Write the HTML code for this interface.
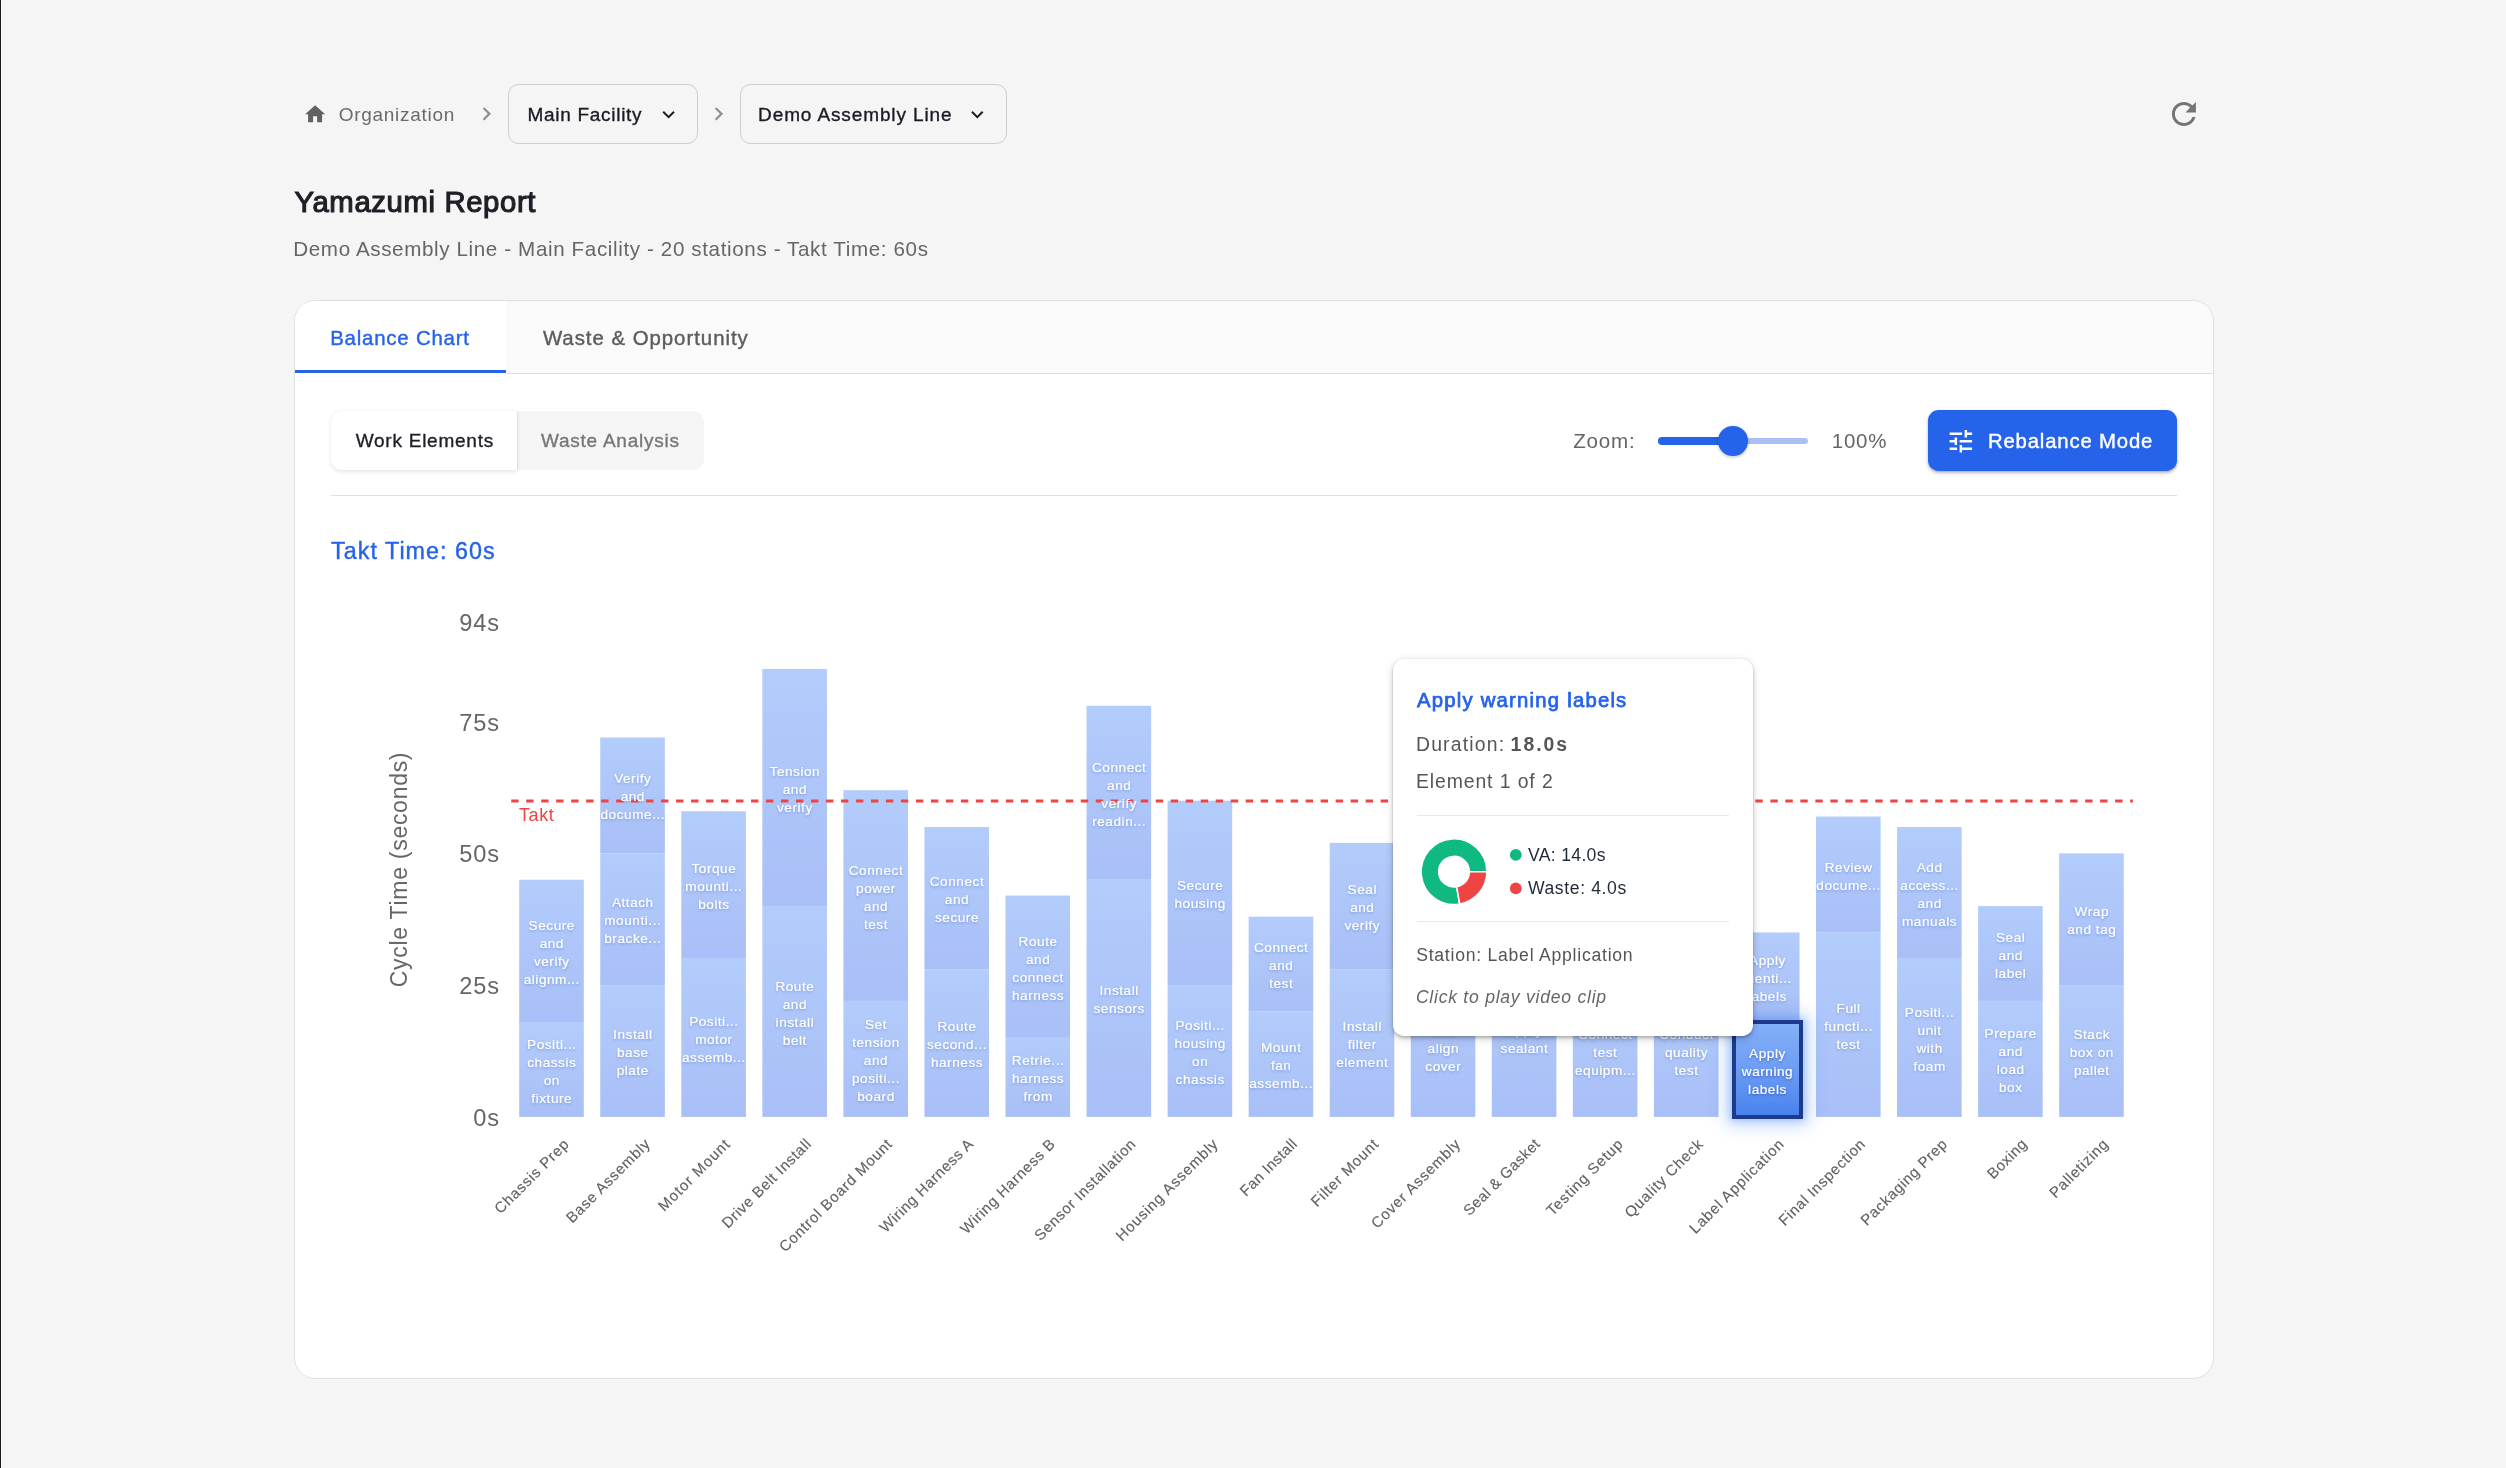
<!DOCTYPE html>
<html><head><meta charset="utf-8"><title>Yamazumi Report</title>
<style>
html,body{margin:0;padding:0}
body{width:2506px;height:1468px;overflow:hidden;background:#f5f5f5;position:relative;font-family:"Liberation Sans", sans-serif}
.a{position:absolute;box-sizing:border-box}
svg.full{position:absolute;left:0;top:0;width:2506px;height:1468px;overflow:visible}
svg text{font-family:"Liberation Sans", sans-serif}
</style></head><body>
<div class="a" style="left:0;top:0;width:1px;height:1468px;background:#18181d"></div>
<div class="a" style="left:1px;top:0;width:1px;height:1468px;background:#fbfbfb"></div>
<!-- breadcrumb selects -->
<div class="a" style="left:508px;top:84px;width:190px;height:59.5px;border:1px solid #cdcdcd;border-radius:10.7px"></div>
<div class="a" style="left:740px;top:84px;width:266.5px;height:59.5px;border:1px solid #cdcdcd;border-radius:10.7px"></div>
<!-- card -->
<div class="a" style="left:294px;top:300px;width:1920px;height:1079px;background:#fff;border:1px solid #e0e0e0;border-radius:21.3px;overflow:hidden">
  <div class="a" style="left:0;top:0;width:1918px;height:73px;background:#fafafa;border-bottom:1px solid #e0e0e0"></div>
  <div class="a" style="left:0;top:0;width:211px;height:73px;background:#fff"></div>
  <div class="a" style="left:0;top:69.3px;width:211px;height:3.2px;background:#2563eb"></div>
</div>
<!-- toggle group -->
<div class="a" style="left:331px;top:411px;width:373px;height:59px;background:#f5f5f5;border-radius:10.7px"></div>
<div class="a" style="left:331px;top:411px;width:186px;height:59px;background:#fff;border-radius:10.7px 0 0 10.7px;box-shadow:0 1.3px 4px rgba(0,0,0,0.10),1px 0 1px rgba(0,0,0,0.05)"></div>
<!-- slider -->
<div class="a" style="left:1657.8px;top:438.3px;width:150px;height:5.4px;border-radius:3px;background:#a9c1f7"></div>
<div class="a" style="left:1657.8px;top:437px;width:78px;height:8px;border-radius:4px;background:#2563eb"></div>
<div class="a" style="left:1718.3px;top:426.2px;width:29.6px;height:29.6px;border-radius:50%;background:#2563eb;box-shadow:0 1.5px 3px rgba(0,0,0,0.16),0 1px 5px rgba(0,0,0,0.08)"></div>
<!-- button -->
<div class="a" style="left:1928px;top:410px;width:249px;height:60.5px;border-radius:10.7px;background:#2563eb;box-shadow:0 1.5px 3px rgba(0,0,0,0.20),0 1px 2px rgba(0,0,0,0.10),0 3px 6px rgba(0,0,0,0.06)"></div>
<!-- divider -->
<div class="a" style="left:331px;top:495px;width:1846px;height:1px;background:#e0e0e0"></div>

<svg class="full" viewBox="0 0 2506 1468" style="opacity:0.9999">
<svg x="303.10" y="102.20" width="24" height="24" viewBox="0 0 24 24"><path d="M10 20v-6h4v6h5v-8h3L12 3 2 12h3v8z" fill="#616161"/></svg>
<svg x="473.20" y="100.50" width="26.67" height="26.67" viewBox="0 0 24 24"><path d="M10 6L8.59 7.41 13.17 12l-4.58 4.59L10 18l6-6z" fill="#8f8f8f"/></svg>
<svg x="705.30" y="100.50" width="26.67" height="26.67" viewBox="0 0 24 24"><path d="M10 6L8.59 7.41 13.17 12l-4.58 4.59L10 18l6-6z" fill="#8f8f8f"/></svg>
<svg x="656.40" y="102.30" width="24.4" height="24.4" viewBox="0 0 24 24"><path d="M16.59 8.59 12 13.17 7.41 8.59 6 10l6 6 6-6z" fill="#1b1b25"/></svg>
<svg x="965.10" y="102.30" width="24.4" height="24.4" viewBox="0 0 24 24"><path d="M16.59 8.59 12 13.17 7.41 8.59 6 10l6 6 6-6z" fill="#1b1b25"/></svg>
<svg x="2165.90" y="95.90" width="36" height="36" viewBox="0 0 24 24"><path d="M17.65 6.35C16.2 4.9 14.21 4 12 4c-4.42 0-7.99 3.58-7.99 8s3.57 8 7.99 8c3.73 0 6.84-2.55 7.73-6h-2.08c-.82 2.33-3.04 4-5.65 4-3.31 0-6-2.69-6-6s2.69-6 6-6c1.66 0 3.14.69 4.22 1.78L13 11h7V4l-2.35 2.35z" fill="#757575"/></svg>
<svg x="1945.85" y="426.15" width="30" height="30" viewBox="0 0 24 24"><path d="M3 17v2h6v-2H3zM3 5v2h10V5H3zm10 16v-2h8v-2h-8v-2h-2v6h2zM7 9v2H3v2h4v2h2V9H7zm14 4v-2H11v2h10zm-6-4h2V7h4V5h-4V3h-2v6z" fill="#fff"/></svg>
<text x="338.71" y="120.70" style="font-size:19.0px;font-weight:400;fill:#6b6b6b;letter-spacing:0.712px" xml:space="preserve">Organization</text>
<text x="527.42" y="120.70" style="font-size:19.0px;font-weight:400;fill:#1b1b25;letter-spacing:0.717px;stroke:#1b1b25;stroke-width:0.36px" xml:space="preserve">Main Facility</text>
<text x="758.12" y="120.70" style="font-size:19.0px;font-weight:400;fill:#1b1b25;letter-spacing:0.879px;stroke:#1b1b25;stroke-width:0.36px" xml:space="preserve">Demo Assembly Line</text>
<text x="294.44" y="211.70" style="font-size:29.3px;font-weight:400;fill:#1f1f27;letter-spacing:0.625px;stroke:#1f1f27;stroke-width:1.15px" xml:space="preserve">Yamazumi Report</text>
<text x="293.29" y="255.90" style="font-size:20.6px;font-weight:400;fill:#666;letter-spacing:0.624px" xml:space="preserve">Demo Assembly Line - Main Facility - 20 stations - Takt Time: 60s</text>
<text x="330.21" y="344.70" style="font-size:20.4px;font-weight:400;fill:#2563eb;letter-spacing:0.796px;stroke:#2563eb;stroke-width:0.4px" xml:space="preserve">Balance Chart</text>
<text x="542.90" y="344.70" style="font-size:20.4px;font-weight:400;fill:#5c5c5c;letter-spacing:0.975px;stroke:#5c5c5c;stroke-width:0.4px" xml:space="preserve">Waste &amp; Opportunity</text>
<text x="355.70" y="446.70" style="font-size:19.0px;font-weight:400;fill:#1f1f27;letter-spacing:0.753px;stroke:#1f1f27;stroke-width:0.36px" xml:space="preserve">Work Elements</text>
<text x="541.00" y="446.70" style="font-size:19.0px;font-weight:400;fill:#777;letter-spacing:0.756px;stroke:#777;stroke-width:0.36px" xml:space="preserve">Waste Analysis</text>
<text x="1573.26" y="447.90" style="font-size:20.6px;font-weight:400;fill:#666;letter-spacing:0.756px" xml:space="preserve">Zoom:</text>
<text x="1831.82" y="447.90" style="font-size:20.5px;font-weight:400;fill:#666;letter-spacing:0.720px" xml:space="preserve">100%</text>
<text x="1987.91" y="448.05" style="font-size:20.3px;font-weight:400;fill:#fff;letter-spacing:0.856px;stroke:#fff;stroke-width:0.4px" xml:space="preserve">Rebalance Mode</text>
<text x="331.04" y="558.80" style="font-size:23.3px;font-weight:400;fill:#2563eb;letter-spacing:1.035px;stroke:#2563eb;stroke-width:0.4px" xml:space="preserve">Takt Time: 60s</text>
<text x="518.92" y="820.90" style="font-size:18.0px;font-weight:400;fill:#ef4444;letter-spacing:0.636px" xml:space="preserve">Takt</text>
<defs><linearGradient id="g" x1="0" y1="0" x2="0" y2="1"><stop offset="0" stop-color="#b2ccfb"/><stop offset="1" stop-color="#a9bff7"/></linearGradient><filter id="ts" x="-20%" y="-20%" width="140%" height="160%"><feDropShadow dx="0" dy="1.3" stdDeviation="1.1" flood-color="#1e3a8a" flood-opacity="0.28"/></filter></defs>
<text x="499.9" y="1125.80" text-anchor="end" style="font-size:23.6px;fill:#666;letter-spacing:0.9px">0s</text>
<text x="499.9" y="993.80" text-anchor="end" style="font-size:23.6px;fill:#666;letter-spacing:0.9px">25s</text>
<text x="499.9" y="861.85" text-anchor="end" style="font-size:23.6px;fill:#666;letter-spacing:0.9px">50s</text>
<text x="499.9" y="730.80" text-anchor="end" style="font-size:23.6px;fill:#666;letter-spacing:0.9px">75s</text>
<text x="499.9" y="630.80" text-anchor="end" style="font-size:23.6px;fill:#666;letter-spacing:0.9px">94s</text>
<text transform="translate(407.2,869.5) rotate(-90)" text-anchor="middle" style="font-size:23px;fill:#666;letter-spacing:0.72px">Cycle Time (seconds)</text>
<rect x="519.20" y="1022.04" width="64.6" height="94.86" fill="url(#g)"/>
<rect x="519.20" y="879.75" width="64.6" height="142.29" fill="url(#g)"/>
<rect x="600.25" y="985.15" width="64.6" height="131.75" fill="url(#g)"/>
<rect x="600.25" y="853.40" width="64.6" height="131.75" fill="url(#g)"/>
<rect x="600.25" y="737.46" width="64.6" height="115.94" fill="url(#g)"/>
<rect x="681.30" y="958.80" width="64.6" height="158.10" fill="url(#g)"/>
<rect x="681.30" y="811.24" width="64.6" height="147.56" fill="url(#g)"/>
<rect x="762.35" y="906.10" width="64.6" height="210.80" fill="url(#g)"/>
<rect x="762.35" y="668.95" width="64.6" height="237.15" fill="url(#g)"/>
<rect x="843.40" y="1000.96" width="64.6" height="115.94" fill="url(#g)"/>
<rect x="843.40" y="790.16" width="64.6" height="210.80" fill="url(#g)"/>
<rect x="924.45" y="969.34" width="64.6" height="147.56" fill="url(#g)"/>
<rect x="924.45" y="827.05" width="64.6" height="142.29" fill="url(#g)"/>
<rect x="1005.50" y="1037.85" width="64.6" height="79.05" fill="url(#g)"/>
<rect x="1005.50" y="895.56" width="64.6" height="142.29" fill="url(#g)"/>
<rect x="1086.55" y="879.75" width="64.6" height="237.15" fill="url(#g)"/>
<rect x="1086.55" y="705.84" width="64.6" height="173.91" fill="url(#g)"/>
<rect x="1167.60" y="985.15" width="64.6" height="131.75" fill="url(#g)"/>
<rect x="1167.60" y="800.70" width="64.6" height="184.45" fill="url(#g)"/>
<rect x="1248.65" y="1011.50" width="64.6" height="105.40" fill="url(#g)"/>
<rect x="1248.65" y="916.64" width="64.6" height="94.86" fill="url(#g)"/>
<rect x="1329.70" y="969.34" width="64.6" height="147.56" fill="url(#g)"/>
<rect x="1329.70" y="842.86" width="64.6" height="126.48" fill="url(#g)"/>
<rect x="1410.75" y="958.80" width="64.6" height="158.10" fill="url(#g)"/>
<rect x="1410.75" y="863.94" width="64.6" height="94.86" fill="url(#g)"/>
<rect x="1491.80" y="958.80" width="64.6" height="158.10" fill="url(#g)"/>
<rect x="1491.80" y="885.02" width="64.6" height="73.78" fill="url(#g)"/>
<rect x="1572.85" y="985.15" width="64.6" height="131.75" fill="url(#g)"/>
<rect x="1572.85" y="874.48" width="64.6" height="110.67" fill="url(#g)"/>
<rect x="1653.90" y="985.15" width="64.6" height="131.75" fill="url(#g)"/>
<rect x="1653.90" y="863.94" width="64.6" height="121.21" fill="url(#g)"/>
<rect x="1734.95" y="932.45" width="64.6" height="89.59" fill="url(#g)"/>
<rect x="1816.00" y="932.45" width="64.6" height="184.45" fill="url(#g)"/>
<rect x="1816.00" y="816.51" width="64.6" height="115.94" fill="url(#g)"/>
<rect x="1897.05" y="958.80" width="64.6" height="158.10" fill="url(#g)"/>
<rect x="1897.05" y="827.05" width="64.6" height="131.75" fill="url(#g)"/>
<rect x="1978.10" y="1000.96" width="64.6" height="115.94" fill="url(#g)"/>
<rect x="1978.10" y="906.10" width="64.6" height="94.86" fill="url(#g)"/>
<rect x="2059.15" y="985.15" width="64.6" height="131.75" fill="url(#g)"/>
<rect x="2059.15" y="853.40" width="64.6" height="131.75" fill="url(#g)"/>
<line x1="511.2" y1="801.0" x2="2132.8" y2="801.0" stroke="#ef4444" stroke-width="2.9" stroke-dasharray="7.4 7.59"/>
<g filter="url(#ts)" text-anchor="middle" style="font-size:13.6px;fill:#fff;letter-spacing:0.55px;stroke:#fff;stroke-width:0.1px">
<text x="551.8" y="1048.5">Positi...</text>
<text x="551.8" y="1066.5">chassis</text>
<text x="551.8" y="1084.5">on</text>
<text x="551.8" y="1102.5">fixture</text>
<text x="551.8" y="929.9">Secure</text>
<text x="551.8" y="947.9">and</text>
<text x="551.8" y="965.9">verify</text>
<text x="551.8" y="983.9">alignm...</text>
<text x="632.8" y="1039.0">Install</text>
<text x="632.8" y="1057.0">base</text>
<text x="632.8" y="1075.0">plate</text>
<text x="632.8" y="907.3">Attach</text>
<text x="632.8" y="925.3">mounti...</text>
<text x="632.8" y="943.3">bracke...</text>
<text x="632.8" y="783.4">Verify</text>
<text x="632.8" y="801.4">and</text>
<text x="632.8" y="819.4">docume...</text>
<text x="713.9" y="1025.9">Positi...</text>
<text x="713.9" y="1043.9">motor</text>
<text x="713.9" y="1061.9">assemb...</text>
<text x="713.9" y="873.0">Torque</text>
<text x="713.9" y="891.0">mounti...</text>
<text x="713.9" y="909.0">bolts</text>
<text x="794.9" y="990.5">Route</text>
<text x="794.9" y="1008.5">and</text>
<text x="794.9" y="1026.5">install</text>
<text x="794.9" y="1044.5">belt</text>
<text x="794.9" y="775.5">Tension</text>
<text x="794.9" y="793.5">and</text>
<text x="794.9" y="811.5">verify</text>
<text x="876.0" y="1028.9">Set</text>
<text x="876.0" y="1046.9">tension</text>
<text x="876.0" y="1064.9">and</text>
<text x="876.0" y="1082.9">positi...</text>
<text x="876.0" y="1100.9">board</text>
<text x="876.0" y="874.6">Connect</text>
<text x="876.0" y="892.6">power</text>
<text x="876.0" y="910.6">and</text>
<text x="876.0" y="928.6">test</text>
<text x="957.0" y="1031.1">Route</text>
<text x="957.0" y="1049.1">second...</text>
<text x="957.0" y="1067.1">harness</text>
<text x="957.0" y="886.2">Connect</text>
<text x="957.0" y="904.2">and</text>
<text x="957.0" y="922.2">secure</text>
<text x="1038.1" y="1065.4">Retrie...</text>
<text x="1038.1" y="1083.4">harness</text>
<text x="1038.1" y="1101.4">from</text>
<text x="1038.1" y="945.7">Route</text>
<text x="1038.1" y="963.7">and</text>
<text x="1038.1" y="981.7">connect</text>
<text x="1038.1" y="999.7">harness</text>
<text x="1119.2" y="995.3">Install</text>
<text x="1119.2" y="1013.3">sensors</text>
<text x="1119.2" y="771.8">Connect</text>
<text x="1119.2" y="789.8">and</text>
<text x="1119.2" y="807.8">verify</text>
<text x="1119.2" y="825.8">readin...</text>
<text x="1200.2" y="1030.0">Positi...</text>
<text x="1200.2" y="1048.0">housing</text>
<text x="1200.2" y="1066.0">on</text>
<text x="1200.2" y="1084.0">chassis</text>
<text x="1200.2" y="889.9">Secure</text>
<text x="1200.2" y="907.9">housing</text>
<text x="1281.2" y="1052.2">Mount</text>
<text x="1281.2" y="1070.2">fan</text>
<text x="1281.2" y="1088.2">assemb...</text>
<text x="1281.2" y="952.1">Connect</text>
<text x="1281.2" y="970.1">and</text>
<text x="1281.2" y="988.1">test</text>
<text x="1362.3" y="1031.1">Install</text>
<text x="1362.3" y="1049.1">filter</text>
<text x="1362.3" y="1067.1">element</text>
<text x="1362.3" y="894.1">Seal</text>
<text x="1362.3" y="912.1">and</text>
<text x="1362.3" y="930.1">verify</text>
<text x="1443.3" y="1016.9">Positi...</text>
<text x="1443.3" y="1034.9">and</text>
<text x="1443.3" y="1052.9">align</text>
<text x="1443.3" y="1070.9">cover</text>
<text x="1443.3" y="908.4">Secure</text>
<text x="1443.3" y="926.4">cover</text>
<text x="1524.4" y="1034.9">Apply</text>
<text x="1524.4" y="1052.9">sealant</text>
<text x="1524.4" y="918.9">Install</text>
<text x="1524.4" y="936.9">gasket</text>
<text x="1605.4" y="1039.0">Connect</text>
<text x="1605.4" y="1057.0">test</text>
<text x="1605.4" y="1075.0">equipm...</text>
<text x="1605.4" y="926.8">Run</text>
<text x="1605.4" y="944.8">test</text>
<text x="1686.5" y="1039.0">Conduct</text>
<text x="1686.5" y="1057.0">quality</text>
<text x="1686.5" y="1075.0">test</text>
<text x="1686.5" y="921.5">Record</text>
<text x="1686.5" y="939.5">results</text>
<text x="1767.5" y="965.2">Apply</text>
<text x="1767.5" y="983.2">identi...</text>
<text x="1767.5" y="1001.2">labels</text>
<text x="1848.6" y="1012.7">Full</text>
<text x="1848.6" y="1030.7">functi...</text>
<text x="1848.6" y="1048.7">test</text>
<text x="1848.6" y="871.5">Review</text>
<text x="1848.6" y="889.5">docume...</text>
<text x="1929.6" y="1016.9">Positi...</text>
<text x="1929.6" y="1034.9">unit</text>
<text x="1929.6" y="1052.9">with</text>
<text x="1929.6" y="1070.9">foam</text>
<text x="1929.6" y="871.9">Add</text>
<text x="1929.6" y="889.9">access...</text>
<text x="1929.6" y="907.9">and</text>
<text x="1929.6" y="925.9">manuals</text>
<text x="2010.7" y="1037.9">Prepare</text>
<text x="2010.7" y="1055.9">and</text>
<text x="2010.7" y="1073.9">load</text>
<text x="2010.7" y="1091.9">box</text>
<text x="2010.7" y="941.5">Seal</text>
<text x="2010.7" y="959.5">and</text>
<text x="2010.7" y="977.5">label</text>
<text x="2091.8" y="1039.0">Stack</text>
<text x="2091.8" y="1057.0">box on</text>
<text x="2091.8" y="1075.0">pallet</text>
<text x="2091.8" y="916.3">Wrap</text>
<text x="2091.8" y="934.3">and tag</text>
</g>
<text transform="translate(570.30,1144.8) rotate(-45)" text-anchor="end" style="font-size:15.0px;fill:#626262;stroke:#626262;stroke-width:0.15px;letter-spacing:0.789px">Chassis Prep</text>
<text transform="translate(651.20,1144.8) rotate(-45)" text-anchor="end" style="font-size:15.0px;fill:#626262;stroke:#626262;stroke-width:0.15px;letter-spacing:0.701px">Base Assembly</text>
<text transform="translate(731.30,1144.8) rotate(-45)" text-anchor="end" style="font-size:15.0px;fill:#626262;stroke:#626262;stroke-width:0.15px;letter-spacing:0.979px">Motor Mount</text>
<text transform="translate(812.20,1144.8) rotate(-45)" text-anchor="end" style="font-size:15.0px;fill:#626262;stroke:#626262;stroke-width:0.15px;letter-spacing:0.599px">Drive Belt Install</text>
<text transform="translate(893.30,1144.8) rotate(-45)" text-anchor="end" style="font-size:15.0px;fill:#626262;stroke:#626262;stroke-width:0.15px;letter-spacing:0.756px">Control Board Mount</text>
<text transform="translate(974.40,1144.8) rotate(-45)" text-anchor="end" style="font-size:15.0px;fill:#626262;stroke:#626262;stroke-width:0.15px;letter-spacing:0.583px">Wiring Harness A</text>
<text transform="translate(1056.40,1144.8) rotate(-45)" text-anchor="end" style="font-size:15.0px;fill:#626262;stroke:#626262;stroke-width:0.15px;letter-spacing:0.658px">Wiring Harness B</text>
<text transform="translate(1137.00,1144.8) rotate(-45)" text-anchor="end" style="font-size:15.0px;fill:#626262;stroke:#626262;stroke-width:0.15px;letter-spacing:0.693px">Sensor Installation</text>
<text transform="translate(1219.10,1144.8) rotate(-45)" text-anchor="end" style="font-size:15.0px;fill:#626262;stroke:#626262;stroke-width:0.15px;letter-spacing:0.866px">Housing Assembly</text>
<text transform="translate(1298.10,1144.8) rotate(-45)" text-anchor="end" style="font-size:15.0px;fill:#626262;stroke:#626262;stroke-width:0.15px;letter-spacing:0.413px">Fan Install</text>
<text transform="translate(1379.70,1144.8) rotate(-45)" text-anchor="end" style="font-size:15.0px;fill:#626262;stroke:#626262;stroke-width:0.15px;letter-spacing:0.789px">Filter Mount</text>
<text transform="translate(1461.60,1144.8) rotate(-45)" text-anchor="end" style="font-size:15.0px;fill:#626262;stroke:#626262;stroke-width:0.15px;letter-spacing:0.779px">Cover Assembly</text>
<text transform="translate(1541.10,1144.8) rotate(-45)" text-anchor="end" style="font-size:15.0px;fill:#626262;stroke:#626262;stroke-width:0.15px;letter-spacing:0.418px">Seal &amp; Gasket</text>
<text transform="translate(1624.20,1144.8) rotate(-45)" text-anchor="end" style="font-size:15.0px;fill:#626262;stroke:#626262;stroke-width:0.15px;letter-spacing:0.819px">Testing Setup</text>
<text transform="translate(1704.40,1144.8) rotate(-45)" text-anchor="end" style="font-size:15.0px;fill:#626262;stroke:#626262;stroke-width:0.15px;letter-spacing:0.842px">Quality Check</text>
<text transform="translate(1785.20,1144.8) rotate(-45)" text-anchor="end" style="font-size:15.0px;fill:#626262;stroke:#626262;stroke-width:0.15px;letter-spacing:0.795px">Label Application</text>
<text transform="translate(1866.40,1144.8) rotate(-45)" text-anchor="end" style="font-size:15.0px;fill:#626262;stroke:#626262;stroke-width:0.15px;letter-spacing:0.658px">Final Inspection</text>
<text transform="translate(1948.30,1144.8) rotate(-45)" text-anchor="end" style="font-size:15.0px;fill:#626262;stroke:#626262;stroke-width:0.15px;letter-spacing:0.670px">Packaging Prep</text>
<text transform="translate(2028.10,1144.8) rotate(-45)" text-anchor="end" style="font-size:15.0px;fill:#626262;stroke:#626262;stroke-width:0.15px;letter-spacing:0.583px">Boxing</text>
<text transform="translate(2109.40,1144.8) rotate(-45)" text-anchor="end" style="font-size:15.0px;fill:#626262;stroke:#626262;stroke-width:0.15px;letter-spacing:0.724px">Palletizing</text>
</svg>

<!-- highlighted segment -->
<div class="a" style="left:1731.9px;top:1020.0px;width:70.9px;height:99.1px;border:4.25px solid #1e3a8a;background:linear-gradient(180deg,#83b0f9 0%,#6f9ff4 45%,#4a83ed 100%);box-shadow:0 0 18px 5px rgba(59,130,246,0.33),0 0 7px 2px rgba(59,130,246,0.30)"></div>
<svg class="full" viewBox="0 0 2506 1468" style="opacity:0.9999"><defs><filter id="ts3" x="-20%" y="-20%" width="140%" height="160%"><feDropShadow dx="0" dy="1.3" stdDeviation="1.1" flood-color="#0b1f66" flood-opacity="0.35"/></filter></defs><g filter="url(#ts3)"><g text-anchor="middle" style="font-size:13.6px;fill:#fff;letter-spacing:0.55px;stroke:#fff;stroke-width:0.1px">
<text x="1767.5" y="1058.1">Apply</text>
<text x="1767.5" y="1076.1">warning</text>
<text x="1767.5" y="1094.1">labels</text>
</g></g></svg>

<!-- tooltip -->
<div class="a" style="left:1392.8px;top:659.3px;width:359.9px;height:376.7px;background:#fff;border-radius:10.7px;box-shadow:0 0 0 0.6px rgba(0,0,0,0.05),0 2px 3px rgba(0,0,0,0.20),0 4px 10px rgba(0,0,0,0.12),0 0 8px rgba(0,0,0,0.06)"></div>
<div class="a" style="left:1417px;top:815px;width:312px;height:1px;background:#e9e9e9"></div>
<div class="a" style="left:1417px;top:921px;width:312px;height:1px;background:#e9e9e9"></div>
<svg class="full" viewBox="0 0 2506 1468" style="opacity:0.9999">
<defs><filter id="ts2" x="-20%" y="-20%" width="140%" height="160%"><feDropShadow dx="0" dy="1.3" stdDeviation="1.1" flood-color="#0b1f66" flood-opacity="0.35"/></filter></defs>
<path d="M1486.90 871.70 A32.9 32.9 0 1 0 1459.71 904.10 L1456.66 886.77 A15.3 15.3 0 1 1 1469.30 871.70Z" fill="#10b981" stroke="#fff" stroke-width="1.6"/><path d="M1459.71 904.10 A32.9 32.9 0 0 0 1486.90 871.70 L1469.30 871.70 A15.3 15.3 0 0 1 1456.66 886.77Z" fill="#ef4444" stroke="#fff" stroke-width="1.6"/>
<circle cx="1515.8" cy="854.9" r="5.9" fill="#10b981"/><circle cx="1515.8" cy="888.4" r="5.9" fill="#ef4444"/>
<text x="1417.00" y="706.80" style="font-size:20.3px;font-weight:400;fill:#2563eb;letter-spacing:1.223px;stroke:#2563eb;stroke-width:0.75px" xml:space="preserve">Apply warning labels</text>
<text x="1415.98" y="750.90" style="font-size:19.4px;font-weight:400;fill:#555;letter-spacing:1.171px" xml:space="preserve">Duration: </text>
<text x="1510.59" y="750.90" style="font-size:19.4px;font-weight:700;fill:#555;letter-spacing:2.013px" xml:space="preserve">18.0s</text>
<text x="1415.98" y="787.80" style="font-size:19.4px;font-weight:400;fill:#555;letter-spacing:0.900px" xml:space="preserve">Element 1 of 2</text>
<text x="1527.90" y="860.90" style="font-size:17.6px;font-weight:400;fill:#1f2937;letter-spacing:0.330px" xml:space="preserve">VA: 14.0s</text>
<text x="1527.90" y="893.80" style="font-size:17.6px;font-weight:400;fill:#1f2937;letter-spacing:0.608px" xml:space="preserve">Waste: 4.0s</text>
<text x="1416.15" y="961.10" style="font-size:17.6px;font-weight:400;fill:#555;letter-spacing:0.756px" xml:space="preserve">Station: Label Application</text>
<text x="1415.88" y="1002.70" style="font-size:17.6px;font-weight:400;fill:#666;letter-spacing:0.745px;font-style:italic" xml:space="preserve">Click to play video clip</text>
</svg>
</body></html>
